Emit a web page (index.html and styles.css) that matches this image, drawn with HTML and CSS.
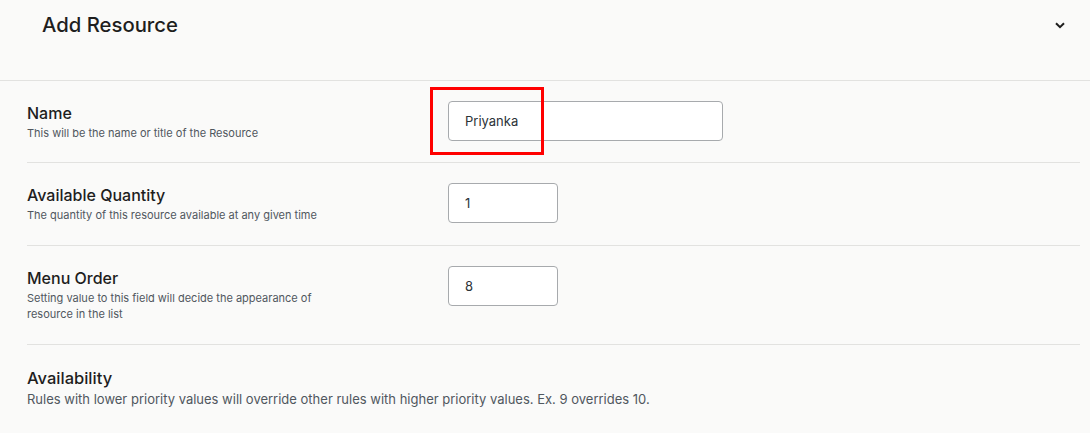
FILE: index.html
```html
<!DOCTYPE html>
<html lang="en">
<head>
<meta charset="utf-8">
<title>Add Resource</title>
<link rel="stylesheet" href="styles.css">
</head>
<body>
<div class="panel">
  <header class="panel-head">
    <h2 class="panel-title">Add Resource</h2>
    <button class="toggle" type="button" aria-label="Collapse">
      <svg width="10" height="7" viewBox="0 0 10 7"><path d="M1 1.2 L5 5.2 L9 1.2" fill="none" stroke="#1e1e1e" stroke-width="2"/></svg>
    </button>
  </header>
  <div class="panel-body">
    <div class="row row-first">
      <div class="info">
        <h3 class="label">Name</h3>
        <p class="desc">This will be the name or title of the Resource</p>
      </div>
      <div class="field">
        <input class="input input-wide" type="text" value="Priyanka">
        <span class="highlight"></span>
      </div>
    </div>
    <div class="row">
      <div class="info">
        <h3 class="label">Available Quantity</h3>
        <p class="desc">The quantity of this resource available at any given time</p>
      </div>
      <div class="field">
        <input class="input input-short" type="text" value="1">
      </div>
    </div>
    <div class="row">
      <div class="info">
        <h3 class="label">Menu Order</h3>
        <p class="desc">Setting value to this field will decide the appearance of resource in the list</p>
      </div>
      <div class="field">
        <input class="input input-short" type="text" value="8">
      </div>
    </div>
    <section class="availability">
      <h3 class="avail-label">Availability</h3>
      <p class="avail-desc">Rules with lower priority values will override other rules with higher priority values. Ex. 9 overrides 10.</p>
    </section>
  </div>
</div>
</body>
</html>
```
FILE: styles.css
```css
* { box-sizing: border-box; }
html, body { margin: 0; padding: 0; }
body {
  background: #fafaf9;
  font-family: Inter, "Noto Sans", sans-serif;
  color: #1e1e1e;
  width: 1090px;
  height: 433px;
  overflow: hidden;
}
.panel { width: 1090px; }
.panel-head {
  height: 81px;
  border-bottom: 1px solid #e2e2e0;
  display: flex;
  align-items: flex-start;
  justify-content: space-between;
  padding: 13px 20px 0 42px;
}
.panel-title {
  margin: 0;
  font-size: 20.3px;
  line-height: 24px;
  font-weight: 500;
  color: #1e1e1e;
}
.toggle {
  border: 0;
  background: transparent;
  padding: 0;
  width: 20px;
  height: 24px;
  display: flex;
  align-items: center;
  justify-content: center;
}
.panel-body { padding: 0 10px 0 27px; }
.row {
  display: flex;
  align-items: flex-start;
  padding: 20px 0 22px;
  border-bottom: 1px solid #e2e2e0;
}
.row-first { padding-bottom: 21px; }
.info { width: 421px; flex: none; }
.label {
  margin: 0;
  font-size: 16px;
  line-height: 24px;
  font-weight: 500;
  color: #1e1e1e;
}
.desc {
  margin: 0;
  font-size: 11px;
  line-height: 16px;
  color: #50575e;
  max-width: 300px;
}
.field { position: relative; }
.input {
  height: 40px;
  border: 1px solid #a7aaad;
  border-radius: 4px;
  background: #fff;
  padding: 0 16px;
  font-family: Inter, "Noto Sans", sans-serif;
  font-size: 13px;
  color: #2c3338;
  outline: none;
}
.input-wide { width: 275px; }
.input-short { width: 110px; }
.highlight {
  position: absolute;
  left: -18px;
  top: -14px;
  width: 114px;
  height: 68px;
  border: 3px solid #ff0000;
  pointer-events: none;
}
.availability { padding-top: 21px; }
.avail-label {
  margin: 0;
  font-family: Inter, "Noto Sans", sans-serif;
  font-size: 16.5px;
  line-height: 24px;
  font-weight: 500;
  color: #1e1e1e;
}
.avail-desc {
  margin: 0;
  font-family: Inter, "Noto Sans", sans-serif;
  font-size: 13px;
  line-height: 18px;
  color: #50575e;
}
```
